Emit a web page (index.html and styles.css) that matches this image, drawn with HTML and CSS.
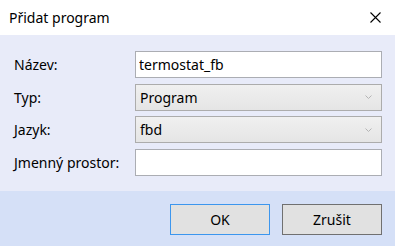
FILE: index.html
```html
<!DOCTYPE html>
<html lang="cs">

<head>
    <meta charset="UTF-8">
    <meta name="viewport" content="width=device-width, initial-scale=1.0">
    <title>Přidat program</title>

    <link rel="stylesheet" href="styles.css">
</head>

<body>
    <main class="dialog">
        <div class="titlebar">
            <span class="title">Přidat program</span>
            <button class="close" title="Zavřít">
                <svg width="11" height="11" viewBox="0 0 11 11">
                    <path d="M0.5 0.5 L10.5 10.5 M10.5 0.5 L0.5 10.5" stroke="#000" stroke-width="1.1" />
                </svg>
            </button>
        </div>

        <div class="form">
            <label for="name">Název:</label>
            <input type="text" id="name" class="field" value="termostat_fb">

            <label>Typ:</label>
            <div class="combo">
                <span>Program</span>
                <svg class="chevron" width="7" height="4" viewBox="0 0 7 4">
                    <path d="M0.5 0.5 L3.5 3.5 L6.5 0.5" stroke="#b4b4b4" stroke-width="1" fill="none" />
                </svg>
            </div>

            <label>Jazyk:</label>
            <div class="combo">
                <span>fbd</span>
                <svg class="chevron" width="7" height="4" viewBox="0 0 7 4">
                    <path d="M0.5 0.5 L3.5 3.5 L6.5 0.5" stroke="#b4b4b4" stroke-width="1" fill="none" />
                </svg>
            </div>

            <label for="ns">Jmenný prostor:</label>
            <input type="text" id="ns" class="field" value="">
        </div>

        <div class="footer">
            <button class="btn btn-default">OK</button>
            <button class="btn">Zrušit</button>
        </div>
    </main>
</body>

</html>
```

FILE: styles.css
```css
body {
    margin: 0;
    font-family: "Noto Sans", sans-serif;
    font-size: 14px;
    color: #000;
}

.dialog {
    display: flex;
    flex-direction: column;
    width: 395px;
    height: 246px;
    background: #fff;
}

.titlebar {
    display: flex;
    align-items: center;
    justify-content: space-between;
    height: 35px;
    padding: 0 14px 0 9px;
    background: #fff;
}

.title {
    font-size: 14px;
    margin-top: -1px;
}

.close {
    display: flex;
    padding: 0;
    border: none;
    background: none;
    margin-top: -1px;
}

.form {
    display: grid;
    grid-template-columns: 121px 247px;
    grid-auto-rows: 27px;
    row-gap: 5.5px;
    align-items: center;
    height: 156px;
    box-sizing: border-box;
    padding: 16px 13px 0 14px;
    background: #e8ebf9;
}

.form label {
    line-height: 27px;
}

.field,
.combo {
    box-sizing: border-box;
    width: 247px;
    height: 27px;
    margin: 0;
    border: 1px solid #abadb3;
    font-family: inherit;
    font-size: 14px;
}

.field {
    padding: 0 3px;
    background: #fff;
    outline: none;
}

.combo {
    display: flex;
    align-items: center;
    justify-content: space-between;
    padding: 0 9px 0 4px;
    border-color: #acacac;
    background: linear-gradient(#f0f0f0, #e5e5e5);
}

.footer {
    display: flex;
    justify-content: flex-end;
    gap: 12px;
    flex: 1;
    padding: 13px 13px 0 0;
    background: #d5e0f7;
}

.btn {
    box-sizing: border-box;
    width: 100px;
    height: 31px;
    border: 1px solid #707070;
    background: #e1e1e1;
    font-family: inherit;
    font-size: 14px;
    color: #000;
}

.btn-default {
    border-color: #3c96ee;
}
```
